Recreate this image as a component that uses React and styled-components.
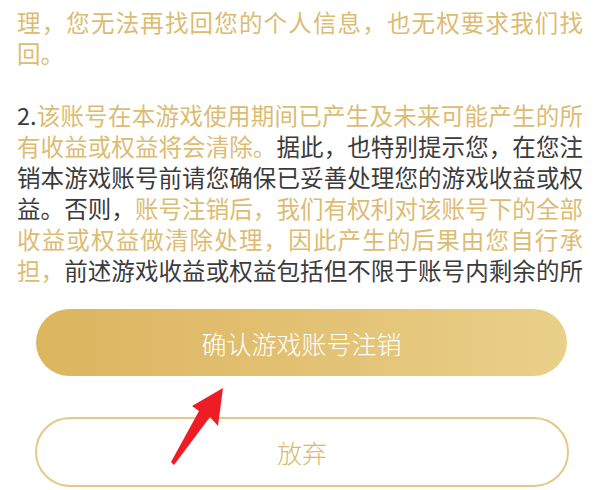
import React from 'react';
import styled, { createGlobalStyle } from 'styled-components';

const gold = '#dcbc72';
const ink = '#3b3b3b';

const GlobalStyle = createGlobalStyle`
  html, body {
    margin: 0;
    padding: 0;
    background: #ffffff;
    overflow: hidden;
  }
`;

// PAGE
const Page = styled.div`
  position: relative;
  width: 608px;
  height: 490px;
  display: flex;
  flex-direction: column;
  background: #ffffff;
  font-family: 'Noto Sans CJK SC', 'Noto Sans', sans-serif;
  overflow: hidden;
`;

// SCROLLED TEXT (viewport top edge sits just under the previous line)
const TextArea = styled.div`
  height: 290px;
  flex-shrink: 0;
  overflow: hidden;
  clip-path: inset(5px 0 0 0);
`;

const Article = styled.div`
  margin-top: -24px;
  padding: 0 25px 0 17px;
  font-size: 23.5px;
  line-height: 31px;
  text-align: justify;
  color: ${ink};
`;

const Para = styled.p`
  margin: 0 0 31px;
`;

const Mark = styled.span`
  color: ${gold};
`;

// BUTTONS
const Actions = styled.div`
  display: flex;
  flex-direction: column;
  align-items: flex-start;
  gap: 41px;
  padding-top: 19px;
`;

const PillButton = styled.button`
  box-sizing: border-box;
  display: flex;
  align-items: center;
  justify-content: center;
  margin-left: ${p => (p.$outline ? '35px' : '36px')};
  width: ${p => (p.$outline ? '534px' : '531px')};
  height: ${p => (p.$outline ? '70px' : '67px')};
  border-radius: 36px;
  border: ${p => (p.$outline ? '2px solid #e5c887' : 'none')};
  background: ${p =>
    p.$outline ? '#ffffff' : 'linear-gradient(90deg, #dcb55f 0%, #e2c173 50%, #e9d089 100%)'};
  color: ${p => (p.$outline ? '#d8b86b' : '#ffffff')};
  font-family: 'Noto Sans CJK SC', 'Noto Sans', sans-serif;
  font-size: 25px;
  font-weight: 300;
  padding: 0;
`;

// ANNOTATION ARROW
const Arrow = styled.svg`
  position: absolute;
  left: 165px;
  top: 380px;
  width: 65px;
  height: 90px;
`;

export default function App() {
  return (
    <Page>
      <GlobalStyle />
      <TextArea>
        <Article>
          <Para>
            <Mark>
              您账号内的个人信息、相关资料等将被删除或匿名化处理，您无法再找回您的个人信息，也无权要求我们找回。
            </Mark>
          </Para>
          <Para>
            2.
            <Mark>该账号在本游戏使用期间已产生及未来可能产生的所有收益或权益将会清除。</Mark>
            据此，也特别提示您，在您注销本游戏账号前请您确保已妥善处理您的游戏收益或权益。否则，
            <Mark>账号注销后，我们有权利对该账号下的全部收益或权益做清除处理，因此产生的后果由您自行承担，</Mark>
            前述游戏收益或权益包括但不限于账号内剩余的所有游戏币、道具、装备等虚拟物品。
          </Para>
        </Article>
      </TextArea>
      <Actions>
        <PillButton>确认游戏账号注销</PillButton>
        <PillButton $outline>放弃</PillButton>
      </Actions>
      <Arrow viewBox="0 0 65 90">
        <polygon
          points="58,8 53,46 45,37 9,85 6,82 34,31 27,26"
          fill="#ee1c25"
        />
      </Arrow>
    </Page>
  );
}
